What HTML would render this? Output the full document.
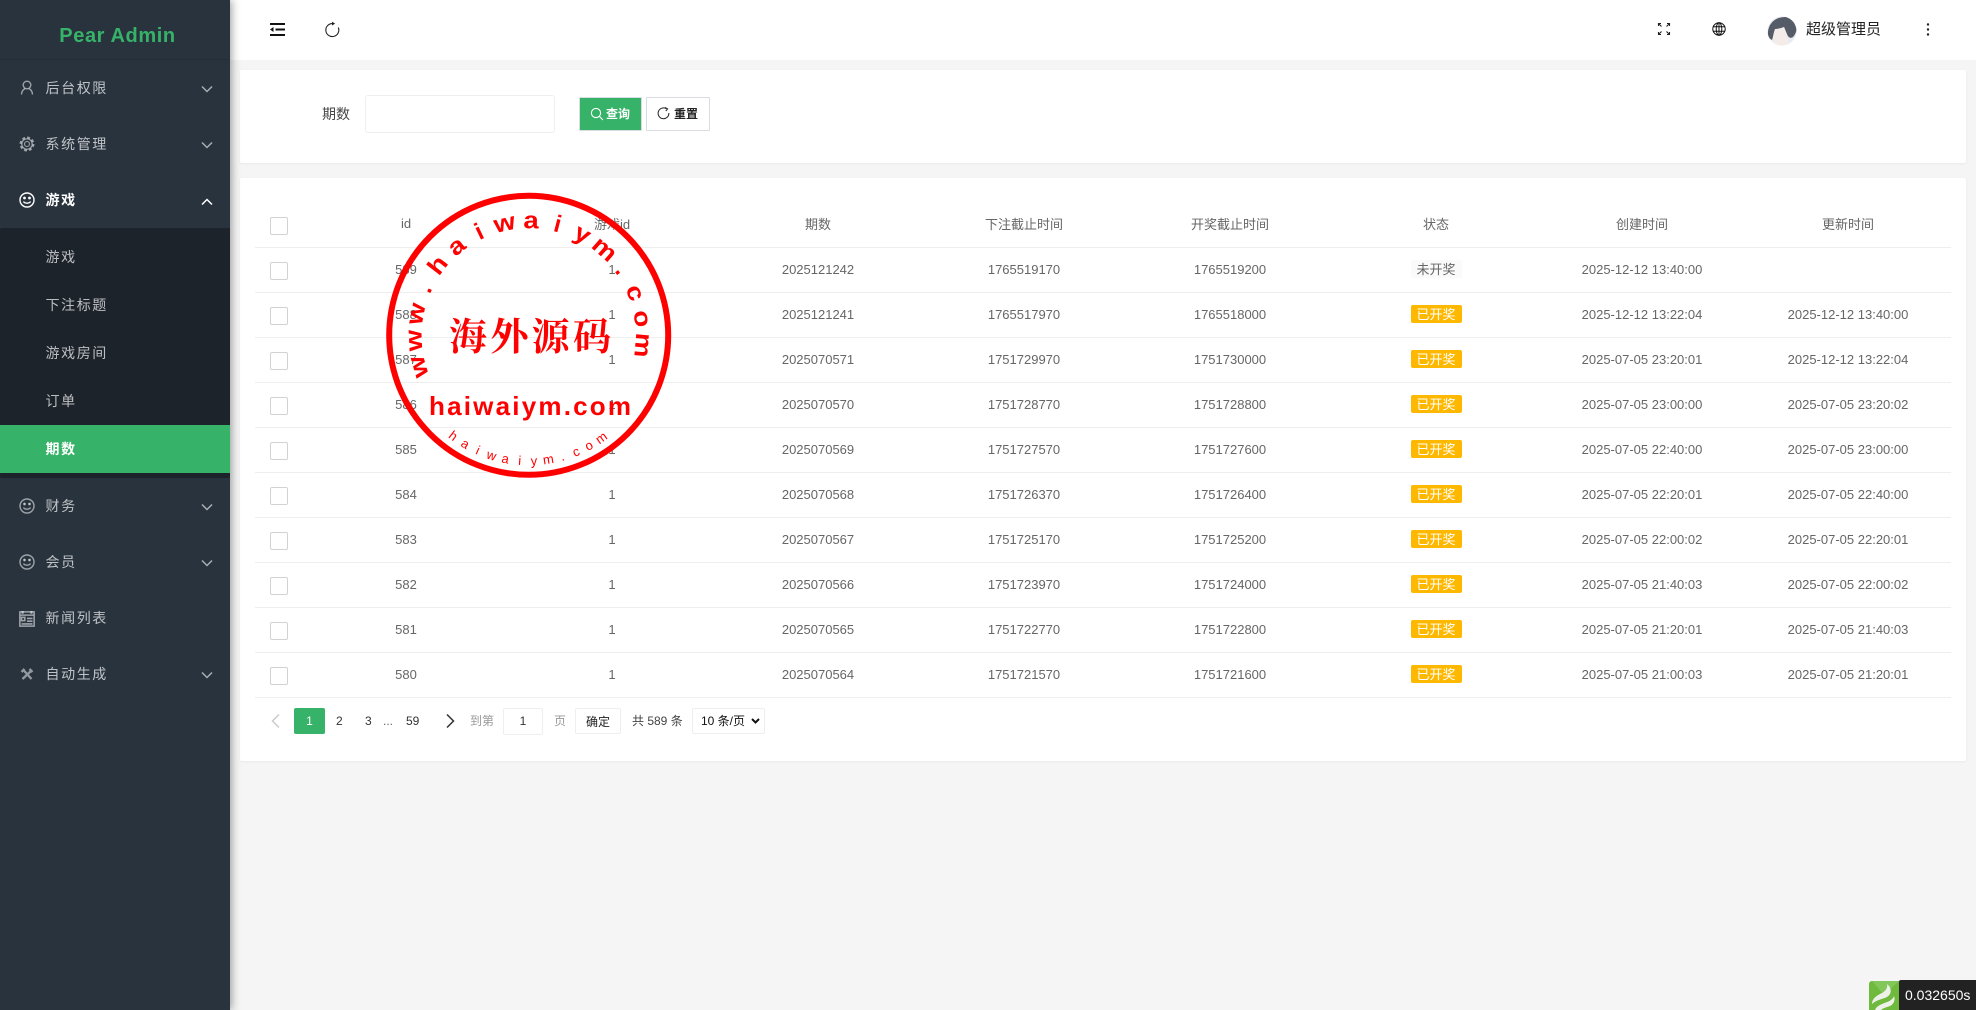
<!DOCTYPE html>
<html lang="zh-CN"><head><meta charset="utf-8"><title>Pear Admin</title>
<style>
*{box-sizing:border-box}
html,body{margin:0;padding:0;width:1976px;height:1010px;overflow:hidden;background:#f5f5f5;font-family:"Liberation Sans","Noto Sans CJK SC",sans-serif;color:#666}
.abs{position:absolute}
#side{position:absolute;left:0;top:0;width:230px;height:1010px;background:#28333e;box-shadow:2px 0 8px rgba(0,0,0,.35);z-index:3}
#logo{position:absolute;left:0;top:0;width:230px;height:60px;border-bottom:1px solid #242d37;color:#36b368;font-weight:bold;font-size:20px;letter-spacing:.6px;line-height:73px;text-align:center;padding-left:5px}
.mi{position:absolute;left:45.500px;font-size:14px;letter-spacing:1.600px;line-height:20px;color:rgba(255,255,255,.7);white-space:nowrap}
.mi.on{color:#fff;font-weight:bold}
.ic{position:absolute;left:17px;width:20px;height:20px;fill:none;stroke:rgba(255,255,255,.55);stroke-width:1.400}
.ch{position:absolute;left:201px;width:12px;height:8px;fill:none;stroke:rgba(255,255,255,.6);stroke-width:1.500}
#sub{position:absolute;left:0;top:228px;width:230px;height:250px;background:#1c232b;border-radius:2px 0 2px 2px}
#act{position:absolute;left:0;top:425px;width:230px;height:48px;background:#36b368}
#top{position:absolute;left:230px;top:0;width:1746px;height:60px;background:#fff}
#c1{position:absolute;left:240px;top:70px;width:1726px;height:93px;background:#fff;border-radius:2px;box-shadow:0 1px 2px rgba(0,0,0,.05)}
#c2{position:absolute;left:240px;top:178px;width:1726px;height:583px;background:#fff;border-radius:2px;box-shadow:0 1px 2px rgba(0,0,0,.05)}
table{position:absolute;left:255px;top:202px;width:1696px;table-layout:fixed;border-collapse:collapse;font-size:13px;color:#666}
td{height:45px;border-bottom:1px solid #eee;text-align:center;padding:0 0 1px;white-space:nowrap}
td:first-child{padding:2px 0 0}
tr:first-child td:first-child{padding-top:4px}
.cb{display:block;width:18px;height:18px;margin-left:15px;border:1px solid #d2d2d2;border-radius:2px;background:#fff}
.t{display:inline-block;position:relative;top:1px;width:51px;height:18px;line-height:20px;background:#ffb800;color:#fff;border-radius:2px;text-align:center;font-size:13px;overflow:hidden}
.t.n{background:#fafafa;color:#666}
.p{position:absolute;font-size:12px;line-height:26px;top:708px;color:#333;white-space:nowrap}
.box{position:absolute;top:708px;height:26px;background:#fff;border:1px solid #eee;border-radius:2px;text-align:center;font-size:12px;line-height:24px;color:#333}
</style></head><body>

<div id="top"></div>
<svg class="abs" style="left:268px;top:21px" width="18" height="17" viewBox="0 0 18 17"><path d="M2 3h15M7.500 8.500h9.500M2 14h15" stroke="#111" stroke-width="2" fill="none"/><path d="M2 8.500l3.500-2.500v5z" fill="#111"/></svg>
<svg class="abs" style="left:323px;top:21px" width="18" height="18" viewBox="0 0 18 18" fill="none"><path d="M10 2.600A6.500 6.500 0 1 0 15.300 6.500" stroke="#222" stroke-width="1.100"/><path d="M9 .8l3.200 1.800L9 4.500z" fill="#222"/></svg>
<svg class="abs" style="left:1657px;top:22px" width="14" height="14" viewBox="0 0 14 14" fill="none" stroke="#222" stroke-width="1.100"><path d="M1.500 4V1.500H4M1.500 1.500l3 3M12.500 4V1.500H10M12.500 1.500l-3 3M1.500 10v2.500H4M1.500 12.500l3-3M12.500 10v2.500H10M12.500 12.500l-3-3"/></svg>
<svg class="abs" style="left:1712px;top:22px" width="14" height="14" viewBox="0 0 14 14" fill="none" stroke="#111" stroke-width="1"><circle cx="7" cy="7" r="6.200"/><ellipse cx="7" cy="7" rx="2.800" ry="6.200"/><path d="M1 4.800h12M1 9.200h12M7 1v12"/></svg>
<svg class="abs" style="left:1767px;top:16px" width="30" height="30" viewBox="0 0 30 30"><defs><clipPath id="av"><circle cx="15" cy="15" r="14.500"/></clipPath></defs><g clip-path="url(#av)"><rect width="30" height="30" fill="#e8ebf1"/><path d="M1 20C0 8 8 1 18 1c4-1 9 1 11 5 2 6 0 12-3 15-3 2-5 0-6-3-1-2-2-5-3-7-3 2-6 3-9 3-1 3-2 7-3 10-2-1-3-2-4-4z" fill="#565c67"/><path d="M8 13c3 0 6-1 9-2 1 3 2 6 3 8l2 11H7C5 25 6 18 8 13z" fill="#f3ece8"/></g></svg>
<div class="abs" style="left:1806px;top:19px;font-size:15px;line-height:22px;color:#222;white-space:nowrap">超级管理员</div>
<svg class="abs" style="left:1925px;top:22px" width="6" height="14" viewBox="0 0 6 14" fill="#222"><circle cx="3" cy="2.500" r="1.200"/><circle cx="3" cy="7.500" r="1.200"/><circle cx="3" cy="12.500" r="1.200"/></svg>

<div id="side">
<div id="logo">Pear Admin</div>
<div id="sub"></div><div id="act"></div>

<svg class="ic" style="top:78px" viewBox="0 0 20 20"><circle cx="10" cy="7" r="3.800"/><path d="M4.500 16.500c.2-3.700 2.200-5.500 3.700-5.700M15.500 16.500c-.2-3.700-2.200-5.500-3.700-5.700"/></svg>
<div class="mi" style="top:78px">后台权限</div>
<svg class="ch" style="top:85px" viewBox="0 0 12 8"><path d="M1 1.500l5 5 5-5"/></svg>

<svg class="ic" style="top:134px" viewBox="0 0 20 20"><circle cx="10" cy="10" r="2.500" stroke-width="1.100"/><circle cx="10" cy="10" r="5.200" stroke-width="1.200"/><circle cx="10" cy="10" r="6.500" stroke-width="1.900" stroke-dasharray="2.900 2.200"/></svg>
<div class="mi" style="top:134px">系统管理</div>
<svg class="ch" style="top:141px" viewBox="0 0 12 8"><path d="M1 1.500l5 5 5-5"/></svg>

<svg class="ic" style="top:190px;stroke:#fff" viewBox="0 0 20 20"><circle cx="10" cy="10" r="7"/><path d="M6.500 11.500c1 2.200 6 2.200 7 0"/><circle cx="7.500" cy="8" r=".7" fill="#fff"/><circle cx="12.500" cy="8" r=".7" fill="#fff"/></svg>
<div class="mi on" style="top:190px">游戏</div>
<svg class="ch" style="top:198px;stroke:#fff" viewBox="0 0 12 8"><path d="M1 6.500l5-5 5 5"/></svg>

<div class="mi" style="top:247px">游戏</div>
<div class="mi" style="top:295px">下注标题</div>
<div class="mi" style="top:343px">游戏房间</div>
<div class="mi" style="top:391px">订单</div>
<div class="mi" style="top:439px;color:#fff;font-weight:bold">期数</div>

<svg class="ic" style="top:496px" viewBox="0 0 20 20"><circle cx="10" cy="10" r="7"/><path d="M6.500 11.500c1 2.200 6 2.200 7 0"/><circle cx="7.500" cy="8" r=".7" fill="#aaa"/><circle cx="12.500" cy="8" r=".7" fill="#aaa"/></svg>
<div class="mi" style="top:496px">财务</div>
<svg class="ch" style="top:503px" viewBox="0 0 12 8"><path d="M1 1.500l5 5 5-5"/></svg>

<svg class="ic" style="top:552px" viewBox="0 0 20 20"><circle cx="10" cy="10" r="7"/><path d="M6.500 11.500c1 2.200 6 2.200 7 0"/><circle cx="7.500" cy="8" r=".7" fill="#aaa"/><circle cx="12.500" cy="8" r=".7" fill="#aaa"/></svg>
<div class="mi" style="top:552px">会员</div>
<svg class="ch" style="top:559px" viewBox="0 0 12 8"><path d="M1 1.500l5 5 5-5"/></svg>

<svg class="ic" style="top:608px;width:22px;height:22px;left:16px" viewBox="0 0 20 20"><path d="M3.500 3.500h13v13h-13zM3.500 6.500h13M10 9.500h5M10 12h5M5 14.500h10"/><path d="M5 4h2M13 4h2" stroke-width="2.500"/><rect x="5" y="8.500" width="3" height="3"/></svg>
<div class="mi" style="top:608px">新闻列表</div>

<svg class="ic" style="top:664px;stroke-width:2.300;stroke:rgba(255,255,255,.5)" viewBox="0 0 20 20"><path d="M5.500 15L14.500 6.500M6 5.500l8.500 9.500M12.500 5l3 3M4.500 8l3-3"/></svg>
<div class="mi" style="top:664px">自动生成</div>
<svg class="ch" style="top:671px" viewBox="0 0 12 8"><path d="M1 1.500l5 5 5-5"/></svg>
</div>

<div id="c1"></div>
<div class="abs" style="left:322px;top:103px;font-size:14px;line-height:22px;color:#444">期数</div>
<div class="abs" style="left:365px;top:95px;width:190px;height:38px;background:#fff;border:1px solid #eee;border-radius:3px"></div>
<div class="abs" style="left:579px;top:97px;width:63px;height:34px;background:#36b368;border:1px solid #d9dde3;color:#fff;font-size:12px;font-weight:bold;line-height:32px;padding-left:26px;border-radius:1px">查询</div>
<svg class="abs" style="left:590px;top:107px" width="14" height="14" viewBox="0 0 14 14" fill="none" stroke="#fff" stroke-width="1.100"><circle cx="6" cy="6" r="4.600"/><path d="M9.500 9.500l3.500 3.500"/></svg>
<div class="abs" style="left:646px;top:97px;width:64px;height:34px;background:#fff;border:1px solid #d9dde3;color:#222;font-size:12px;font-weight:bold;line-height:32px;padding-left:27px;border-radius:1px">重置</div>
<svg class="abs" style="left:657px;top:107px" width="13" height="13" viewBox="0 0 13 13" fill="none" stroke="#222" stroke-width="1"><path d="M9 1.500A5.400 5.400 0 1 0 11.900 6"/><path d="M8 .5l2.600 1.400L8.800 4"/></svg>

<div id="c2"></div>
<table>
<colgroup><col style="width:48px"><col span="8" style="width:206px"></colgroup>
<tr><td><i class="cb"></i></td><td>id</td><td>游戏id</td><td>期数</td><td>下注截止时间</td><td>开奖截止时间</td><td>状态</td><td>创建时间</td><td>更新时间</td></tr>
<tr><td><i class="cb"></i></td><td>589</td><td>1</td><td>2025121242</td><td>1765519170</td><td>1765519200</td><td><span class="t n">未开奖</span></td><td>2025-12-12 13:40:00</td><td></td></tr>
<tr><td><i class="cb"></i></td><td>588</td><td>1</td><td>2025121241</td><td>1765517970</td><td>1765518000</td><td><span class="t">已开奖</span></td><td>2025-12-12 13:22:04</td><td>2025-12-12 13:40:00</td></tr>
<tr><td><i class="cb"></i></td><td>587</td><td>1</td><td>2025070571</td><td>1751729970</td><td>1751730000</td><td><span class="t">已开奖</span></td><td>2025-07-05 23:20:01</td><td>2025-12-12 13:22:04</td></tr>
<tr><td><i class="cb"></i></td><td>586</td><td>1</td><td>2025070570</td><td>1751728770</td><td>1751728800</td><td><span class="t">已开奖</span></td><td>2025-07-05 23:00:00</td><td>2025-07-05 23:20:02</td></tr>
<tr><td><i class="cb"></i></td><td>585</td><td>1</td><td>2025070569</td><td>1751727570</td><td>1751727600</td><td><span class="t">已开奖</span></td><td>2025-07-05 22:40:00</td><td>2025-07-05 23:00:00</td></tr>
<tr><td><i class="cb"></i></td><td>584</td><td>1</td><td>2025070568</td><td>1751726370</td><td>1751726400</td><td><span class="t">已开奖</span></td><td>2025-07-05 22:20:01</td><td>2025-07-05 22:40:00</td></tr>
<tr><td><i class="cb"></i></td><td>583</td><td>1</td><td>2025070567</td><td>1751725170</td><td>1751725200</td><td><span class="t">已开奖</span></td><td>2025-07-05 22:00:02</td><td>2025-07-05 22:20:01</td></tr>
<tr><td><i class="cb"></i></td><td>582</td><td>1</td><td>2025070566</td><td>1751723970</td><td>1751724000</td><td><span class="t">已开奖</span></td><td>2025-07-05 21:40:03</td><td>2025-07-05 22:00:02</td></tr>
<tr><td><i class="cb"></i></td><td>581</td><td>1</td><td>2025070565</td><td>1751722770</td><td>1751722800</td><td><span class="t">已开奖</span></td><td>2025-07-05 21:20:01</td><td>2025-07-05 21:40:03</td></tr>
<tr><td><i class="cb"></i></td><td>580</td><td>1</td><td>2025070564</td><td>1751721570</td><td>1751721600</td><td><span class="t">已开奖</span></td><td>2025-07-05 21:00:03</td><td>2025-07-05 21:20:01</td></tr>
</table>

<svg class="abs" style="left:270px;top:713px" width="11" height="16" viewBox="0 0 11 16" fill="none" stroke="#ccc" stroke-width="1.500"><path d="M9 1.500L2.500 8 9 14.500"/></svg>
<div class="abs" style="left:294px;top:708px;width:31px;height:26px;background:#36b368;color:#fff;border-radius:2px;text-align:center;font-size:12px;line-height:26px">1</div>
<div class="p" style="left:336px">2</div>
<div class="p" style="left:365px">3</div>
<div class="p" style="left:383px;color:#666">...</div>
<div class="p" style="left:406px">59</div>
<svg class="abs" style="left:445px;top:713px" width="11" height="16" viewBox="0 0 11 16" fill="none" stroke="#333" stroke-width="1.500"><path d="M2 1.500L8.500 8 2 14.500"/></svg>
<div class="p" style="left:470px;color:#999">到第</div>
<div class="box" style="left:503px;width:40px;height:27px;line-height:25px;color:#333">1</div>
<div class="p" style="left:554px;color:#999">页</div>
<div class="box" style="left:575px;width:46px;color:#222;line-height:26px">确定</div>
<div class="p" style="left:632px;color:#444">共 589 条</div>
<div class="box" style="left:692px;width:73px;text-align:left;padding-left:8px;color:#111">10 条/页</div>
<svg class="abs" style="left:751px;top:718px" width="9" height="6" viewBox="0 0 9 6" fill="none" stroke="#111" stroke-width="2"><path d="M1 1l3.500 3.500L8 1"/></svg>

<svg class="abs" style="left:380px;top:190px;z-index:2" width="300" height="300" viewBox="380 190 300 300" fill="#f00" font-family="Liberation Sans, sans-serif">
<circle cx="528.700" cy="335.300" r="139.500" fill="none" stroke="#f00" stroke-width="6"/>
<g font-weight="bold" font-size="24" text-anchor="middle">
<text transform="translate(528.700 335.300) rotate(-106) translate(0 -107) scale(1.150 1)">w</text>
<text transform="translate(528.700 335.300) rotate(-92.600) translate(0 -107) scale(1.150 1)">w</text>
<text transform="translate(528.700 335.300) rotate(-79.200) translate(0 -107) scale(1.150 1)">w</text>
<text transform="translate(528.700 335.300) rotate(-65.800) translate(0 -107)">.</text>
<text transform="translate(528.700 335.300) rotate(-52.400) translate(0 -107) scale(1.150 1)">h</text>
<text transform="translate(528.700 335.300) rotate(-39) translate(0 -107) scale(1.150 1)">a</text>
<text transform="translate(528.700 335.300) rotate(-25.600) translate(0 -107)">i</text>
<text transform="translate(528.700 335.300) rotate(-12.200) translate(0 -107) scale(1.150 1)">w</text>
<text transform="translate(528.700 335.300) rotate(1.200) translate(0 -107) scale(1.150 1)">a</text>
<text transform="translate(528.700 335.300) rotate(14.600) translate(0 -107)">i</text>
<text transform="translate(528.700 335.300) rotate(28) translate(0 -107) scale(1.150 1)">y</text>
<text transform="translate(528.700 335.300) rotate(41.400) translate(0 -107) scale(1.150 1)">m</text>
<text transform="translate(528.700 335.300) rotate(54.800) translate(0 -107)">.</text>
<text transform="translate(528.700 335.300) rotate(68.200) translate(0 -107) scale(1.150 1)">c</text>
<text transform="translate(528.700 335.300) rotate(81.600) translate(0 -107) scale(1.150 1)">o</text>
<text transform="translate(528.700 335.300) rotate(95) translate(0 -107) scale(1.150 1)">m</text>
</g>
<g font-size="13" text-anchor="middle">
<text transform="translate(528.700 335.300) rotate(36.900) translate(0 130)">h</text>
<text transform="translate(528.700 335.300) rotate(30.300) translate(0 130)">a</text>
<text transform="translate(528.700 335.300) rotate(23.800) translate(0 130)">i</text>
<text transform="translate(528.700 335.300) rotate(17.200) translate(0 130)">w</text>
<text transform="translate(528.700 335.300) rotate(10.700) translate(0 130)">a</text>
<text transform="translate(528.700 335.300) rotate(4.100) translate(0 130)">i</text>
<text transform="translate(528.700 335.300) rotate(-2.400) translate(0 130)">y</text>
<text transform="translate(528.700 335.300) rotate(-9) translate(0 130)">m</text>
<text transform="translate(528.700 335.300) rotate(-15.500) translate(0 130)">.</text>
<text transform="translate(528.700 335.300) rotate(-22.100) translate(0 130)">c</text>
<text transform="translate(528.700 335.300) rotate(-28.600) translate(0 130)">o</text>
<text transform="translate(528.700 335.300) rotate(-35.300) translate(0 130)">m</text>
</g>
<text x="429" y="415" font-size="26" font-weight="bold" textLength="202" lengthAdjust="spacing">haiwaiym.com</text>
<text x="449" y="350" font-family="Noto Serif CJK SC, serif" font-size="38" font-weight="bold" textLength="162" lengthAdjust="spacing">海外源码</text>
</svg>

<svg class="abs" style="left:1869px;top:981px" width="30" height="29" viewBox="0 0 30 29"><path d="M3 0h27v29H0V3a3 3 0 0 1 3-3z" fill="#6fb93c"/><path d="M3 0h27L15 14z" fill="#83c65a"/><path d="M3 23c0-6 6-9 10-11 4-2 6-6 5-9 5 4 5 10 0 13-4 2-11 3-15 7zM6 29c1-4 7-6 12-8 3-1 6-3 7-6 2 6-2 10-7 11-3 1-5 2-6 3z" fill="#eef1ea"/></svg>
<div class="abs" style="left:1899px;top:980px;width:77px;height:30px;background:#222;color:#fff;font-size:14px;line-height:30px;padding-left:6px;border-radius:2px 0 0 0">0.032650s</div>
</body></html>
